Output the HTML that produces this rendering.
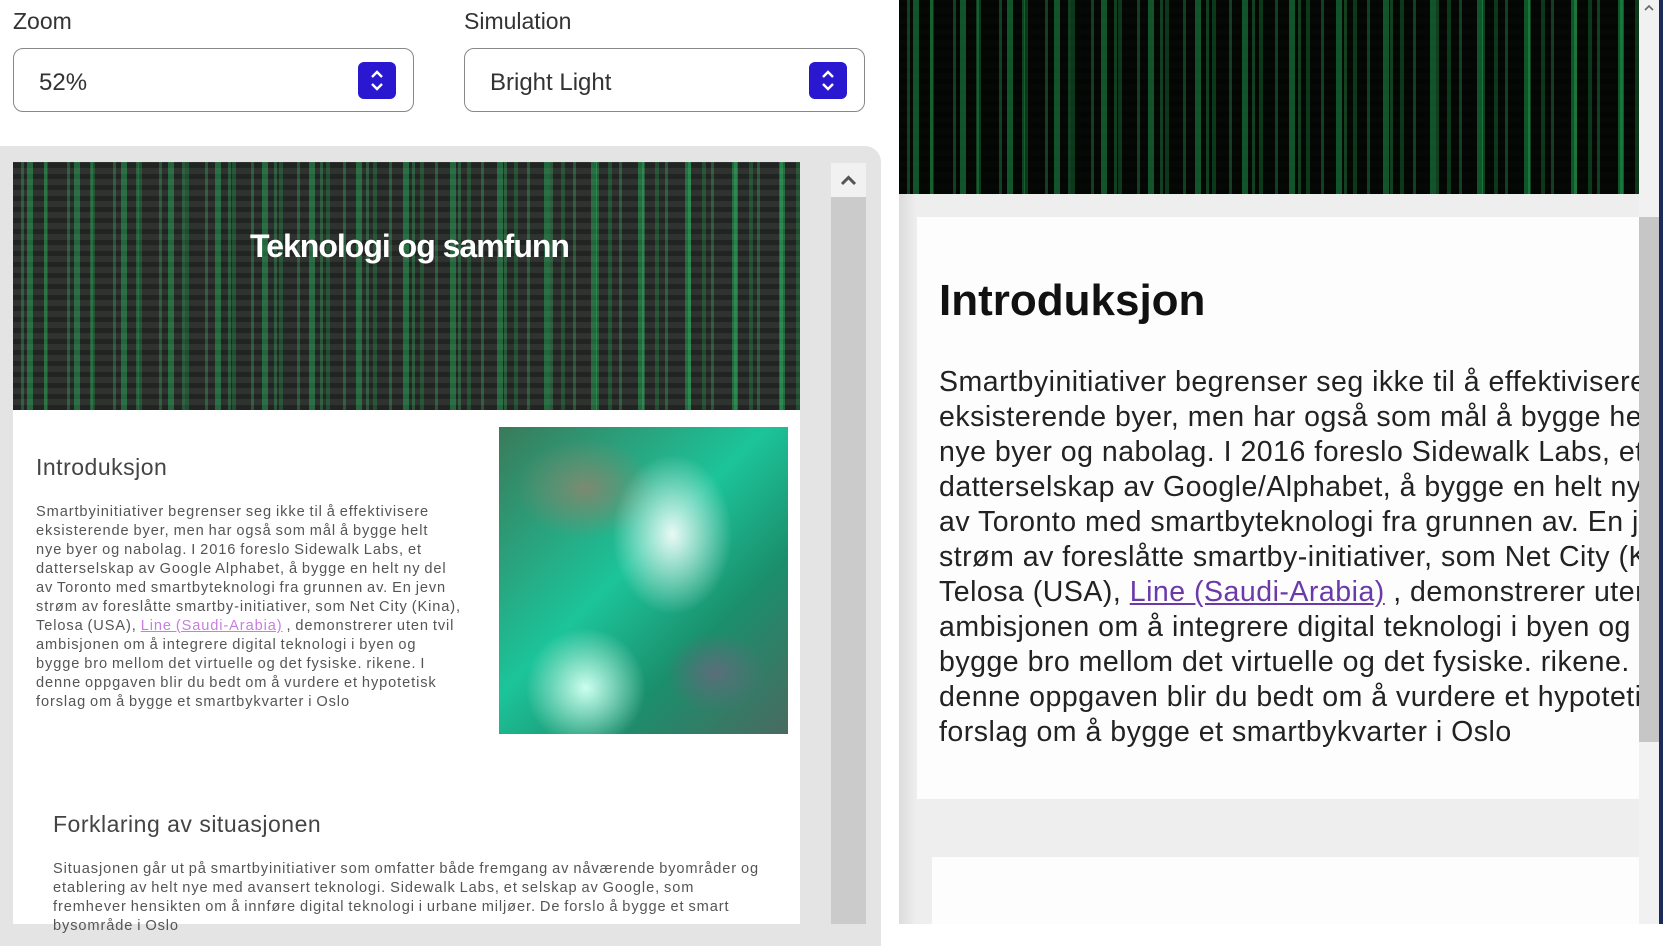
<!DOCTYPE html>
<html><head><meta charset="utf-8"><style>
*{margin:0;padding:0;box-sizing:border-box}
body{width:1663px;height:924px;overflow:hidden;background:#fff;font-family:"Liberation Sans",sans-serif;position:relative}
.abs{position:absolute}
.lbl{font-size:23px;color:#333;top:8px}
.sel{top:48px;width:401px;height:64px;border:1.5px solid #888;border-radius:10px;background:#fff;font-size:24px;color:#333;padding:20px 0 0 25px}
.spin{position:absolute;right:17px;top:13px;width:38px;height:37px;background:#2a17d0;border-radius:6px}
.matrix{background:
 repeating-linear-gradient(90deg,transparent 0 14px,rgba(40,200,100,.4) 14px 20px,transparent 20px 31px,rgba(30,170,80,.3) 31px 35px,transparent 35px 47px),
 repeating-linear-gradient(90deg,transparent 0 8px,rgba(60,230,120,.25) 8px 11px,transparent 11px 23px),
 repeating-linear-gradient(0deg,rgba(0,0,0,.3) 0 5px,transparent 5px 11px),
 #2f3330}
.body{white-space:nowrap;color:#555;font-size:14.6px;line-height:19px;letter-spacing:.9px;word-spacing:-1px;font-family:"Liberation Sans",sans-serif}
.rt{white-space:nowrap;color:#222;font-size:28.5px;line-height:35px;letter-spacing:.5px}
</style></head><body>
<div class="abs lbl" style="left:13px">Zoom</div>
<div class="abs lbl" style="left:464px">Simulation</div>
<div class="abs sel" style="left:13px">52%<div class="spin"><svg width="38" height="37" viewBox="0 0 38 37"><path d="M14 15l5-5 5 5M14 22l5 5 5-5" stroke="#fff" stroke-width="2.4" fill="none"/></svg></div></div>
<div class="abs sel" style="left:464px">Bright Light<div class="spin"><svg width="38" height="37" viewBox="0 0 38 37"><path d="M14 15l5-5 5 5M14 22l5 5 5-5" stroke="#fff" stroke-width="2.4" fill="none"/></svg></div></div>

<div class="abs" style="left:0;top:146px;width:881px;height:800px;background:#e4e4e4;border-top-right-radius:16px"></div>
<div class="abs" style="left:13px;top:162px;width:787px;height:762px;background:#fff"></div>
<div class="abs matrix" style="left:13px;top:162px;width:787px;height:248px"></div>
<div class="abs" style="left:13px;top:228px;width:793px;text-align:center;color:#fff;font-weight:bold;font-size:32px;letter-spacing:-1px">Teknologi og samfunn</div>
<div class="abs" style="left:36px;top:454px;font-size:23px;color:#444;letter-spacing:.5px">Introduksjon</div>
<div class="abs body" style="left:36px;top:503px">Smartbyinitiativer begrenser seg ikke til å effektivisere<br>eksisterende byer, men har også som mål å bygge helt<br>nye byer og nabolag. I 2016 foreslo Sidewalk Labs, et<br>datterselskap av Google Alphabet, å bygge en helt ny del<br>av Toronto med smartbyteknologi fra grunnen av. En jevn<br>strøm av foreslåtte smartby-initiativer, som Net City (Kina),<br>Telosa (USA), <span style="color:#c77ee0;text-decoration:underline">Line (Saudi-Arabia)</span> , demonstrerer uten tvil<br>ambisjonen om å integrere digital teknologi i byen og<br>bygge bro mellom det virtuelle og det fysiske. rikene. I<br>denne oppgaven blir du bedt om å vurdere et hypotetisk<br>forslag om å bygge et smartbykvarter i Oslo</div>
<div class="abs" style="left:499px;top:427px;width:289px;height:307px;background:
 radial-gradient(ellipse 60px 80px at 60% 35%,rgba(255,255,255,.9),transparent),
 radial-gradient(ellipse 70px 50px at 30% 20%,#7c8a70,transparent),
 radial-gradient(ellipse 50px 40px at 75% 80%,#5a6e7a,transparent),
 radial-gradient(ellipse 60px 60px at 30% 85%,#cfe,transparent),
 linear-gradient(135deg,#3a7a5a,#1cc49a 45%,#1b8f6c 70%,#4a6a60)"></div>
<div class="abs" style="left:53px;top:811px;font-size:23px;color:#444;letter-spacing:.5px">Forklaring av situasjonen</div>
<div class="abs body" style="left:53px;top:860px">Situasjonen går ut på smartbyinitiativer som omfatter både fremgang av nåværende byområder og<br>etablering av helt nye med avansert teknologi. Sidewalk Labs, et selskap av Google, som<br>fremhever hensikten om å innføre digital teknologi i urbane miljøer. De forslo å bygge et smart<br>bysområde i Oslo</div>
<div class="abs" style="left:831px;top:163px;width:35px;height:761px;background:#cbcbcb"></div>
<div class="abs" style="left:831px;top:163px;width:35px;height:34px;background:#f1f1f1"><svg width="35" height="34"><path d="M11 21l6.5-6.5 6.5 6.5" stroke="#555" stroke-width="3" fill="none"/></svg></div>

<div class="abs" style="left:881px;top:0;width:18px;height:924px;background:#fff"></div>
<div class="abs" style="left:899px;top:0;width:740px;height:924px;background:#efeeef"></div>
<div class="abs" style="left:899px;top:194px;width:18px;height:730px;background:linear-gradient(90deg,#dcdcdc,#efefef)"></div>
<div class="abs matrix" style="left:899px;top:0;width:740px;height:194px;background-color:#050805"></div>
<div class="abs" style="left:917px;top:217px;width:722px;height:582px;background:#fdfdfd"></div>
<div class="abs" style="left:932px;top:857px;width:707px;height:67px;background:#fdfdfd"></div>
<div class="abs" style="left:939px;top:276px;font-size:44px;font-weight:bold;color:#111">Introduksjon</div>
<div class="abs" style="left:917px;top:200px;width:722px;height:600px;overflow:hidden"><div class="abs rt" style="left:22px;top:165px">Smartbyinitiativer begrenser seg ikke til å effektivisere<br>eksisterende byer, men har også som mål å bygge helt<br>nye byer og nabolag. I 2016 foreslo Sidewalk Labs, et<br>datterselskap av Google/Alphabet, å bygge en helt ny del<br>av Toronto med smartbyteknologi fra grunnen av. En jevn<br>strøm av foreslåtte smartby-initiativer, som Net City (Kina),<br>Telosa (USA), <span style="color:#6a3aa8;text-decoration:underline">Line (Saudi-Arabia)</span> , demonstrerer uten tvil<br>ambisjonen om å integrere digital teknologi i byen og<br>bygge bro mellom det virtuelle og det fysiske. rikene. I<br>denne oppgaven blir du bedt om å vurdere et hypotetisk<br>forslag om å bygge et smartbykvarter i Oslo</div></div>
<div class="abs" style="left:1639px;top:0;width:24px;height:924px;background:#f1f1f1"></div>
<div class="abs" style="left:1639px;top:217px;width:20px;height:525px;background:#c6c6c6"></div>
<div class="abs" style="left:1659px;top:0;width:4px;height:924px;background:#1c2a5a"></div>
<svg class="abs" style="left:1642px;top:2px" width="14" height="12"><path d="M3 8l4-4 4 4" stroke="#666" stroke-width="1.6" fill="none"/></svg>
</body></html>
